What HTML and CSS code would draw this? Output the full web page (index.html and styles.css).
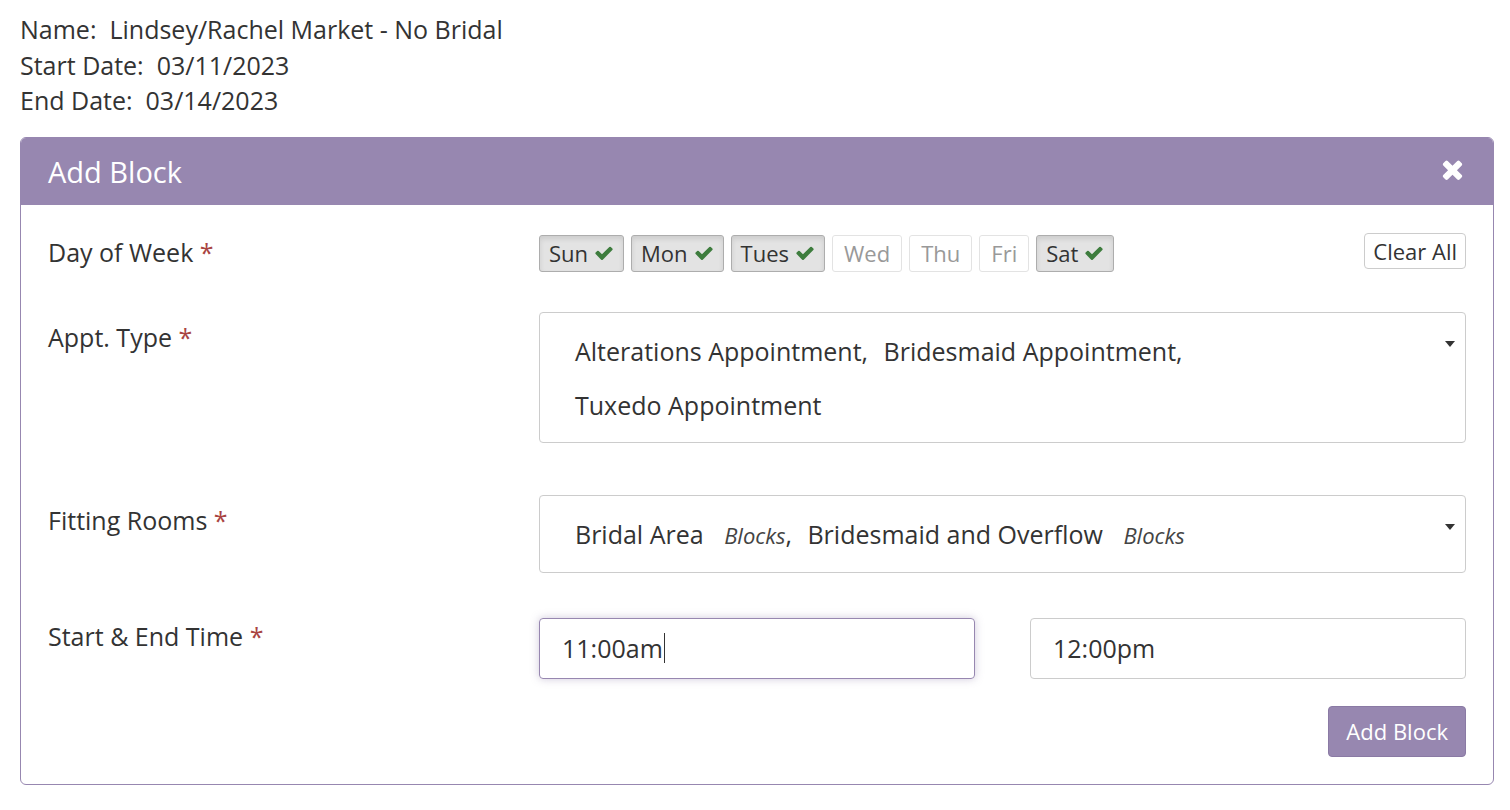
FILE: index.html
```html
<!DOCTYPE html>
<html>
    <head>
        <meta http-equiv="Content-Type" content="text/html; charset=UTF-8">
        <title>Add Block</title>
        <link rel="stylesheet" href="styles.css">
    </head>
    <body>
        <div class="event-info">
            <div>Name:&nbsp; Lindsey/Rachel Market - No Bridal</div>
            <div>Start Date:&nbsp; 03/11/2023</div>
            <div>End Date:&nbsp; 03/14/2023</div>
        </div>

        <div class="panel">
            <div class="panel-heading">
                <span>Add Block</span>
                <svg class="close-icon" viewBox="0 0 1408 1792" width="23" height="30">
                    <path fill="#fff" d="M1298 1214q0 40-28 68l-136 136q-28 28-68 28t-68-28l-294-294-294 294q-28 28-68 28t-68-28l-136-136q-28-28-28-68t28-68l294-294-294-294q-28-28-28-68t28-68l136-136q28-28 68-28t68 28l294 294 294-294q28-28 68-28t68 28l136 136q28 28 28 68t-28 68l-294 294 294 294q28 28 28 68z"/>
                </svg>
            </div>
            <div class="panel-body">
                <!-- day of week -->
                <div class="form-row row-days">
                    <label class="label-tight">Day of Week <span class="req">*</span></label>
                    <div class="days">
                        <div class="day-list">
                            <span class="day on">Sun <svg class="check" viewBox="0 0 1792 1792"><path d="M1671 566q0 40-28 68l-724 724-136 136q-28 28-68 28t-68-28l-136-136-362-362q-28-28-28-68t28-68l136-136q28-28 68-28t68 28l294 295 656-657q28-28 68-28t68 28l136 136q28 28 28 68z"/></svg></span>
                            <span class="day on">Mon <svg class="check" viewBox="0 0 1792 1792"><path d="M1671 566q0 40-28 68l-724 724-136 136q-28 28-68 28t-68-28l-136-136-362-362q-28-28-28-68t28-68l136-136q28-28 68-28t68 28l294 295 656-657q28-28 68-28t68 28l136 136q28 28 28 68z"/></svg></span>
                            <span class="day on">Tues <svg class="check" viewBox="0 0 1792 1792"><path d="M1671 566q0 40-28 68l-724 724-136 136q-28 28-68 28t-68-28l-136-136-362-362q-28-28-28-68t28-68l136-136q28-28 68-28t68 28l294 295 656-657q28-28 68-28t68 28l136 136q28 28 28 68z"/></svg></span>
                            <span class="day">Wed</span>
                            <span class="day">Thu</span>
                            <span class="day">Fri</span>
                            <span class="day on">Sat <svg class="check" viewBox="0 0 1792 1792"><path d="M1671 566q0 40-28 68l-724 724-136 136q-28 28-68 28t-68-28l-136-136-362-362q-28-28-28-68t28-68l136-136q28-28 68-28t68 28l294 295 656-657q28-28 68-28t68 28l136 136q28 28 28 68z"/></svg></span>
                        </div>
                        <button class="btn-clear">Clear All</button>
                    </div>
                </div>

                <!-- appointment type -->
                <div class="form-row row-appt">
                    <label>Appt. Type <span class="req">*</span></label>
                    <div class="multi-select">
                        <div class="choices">
                            <span class="choice">Alterations Appointment,</span>
                            <span class="choice">Bridesmaid Appointment,</span>
                            <span class="choice">Tuxedo Appointment</span>
                        </div>
                        <span class="caret"></span>
                    </div>
                </div>

                <!-- fitting rooms -->
                <div class="form-row row-rooms">
                    <label>Fitting Rooms <span class="req">*</span></label>
                    <div class="multi-select">
                        <div class="choices">
                            <span class="choice">Bridal Area <em>Blocks</em>,</span>
                            <span class="choice">Bridesmaid and Overflow <em>Blocks</em></span>
                        </div>
                        <span class="caret"></span>
                    </div>
                </div>

                <!-- times -->
                <div class="form-row row-times">
                    <label class="label-tight">Start &amp; End Time <span class="req">*</span></label>
                    <div class="times">
                        <div class="time-input focused">11:00am<span class="cursor"></span></div>
                        <div class="time-input">12:00pm</div>
                    </div>
                </div>

                <div class="actions">
                    <button class="btn-add">Add Block</button>
                </div>
            </div>
        </div>
    </body>
</html>
```

FILE: styles.css
```css
body {
    margin: 0;
    padding: 12px 16px 0 20px;
    font-family: "Open Sans", Arial, sans-serif;
    color: #333;
    background: #fff;
}
.event-info {
    font-size: 25px;
    line-height: 35.5px;
    margin-bottom: 18px;
}

/* Panel */
.panel {
    border: 1px solid #9787b0;
    border-radius: 6px;
    overflow: hidden;
}
.panel-heading {
    background-color: #9787b0;
    color: #fff;
    height: 67px;
    padding: 0 29px 0 27px;
    display: flex;
    align-items: center;
    justify-content: space-between;
    font-size: 29px;
}
.close-icon {
    display: block;
}
.panel-body {
    padding: 29px 27px 27px 27px;
}

.form-row {
    display: grid;
    grid-template-columns: 491px 1fr;
    align-items: start;
}
.form-row label {
    font-size: 25px;
    line-height: 30px;
    padding-top: 10px;
}
.form-row label.label-tight {
    padding-top: 3px;
}
.req {
    color: #a94442;
}
.row-days {
    margin-bottom: 40px;
}
.row-appt {
    margin-bottom: 52px;
}
.row-rooms {
    margin-bottom: 45px;
}
.row-times {
    margin-bottom: 27px;
}

/* Day of week toggles */
.days {
    display: flex;
    justify-content: space-between;
    align-items: flex-start;
}
.day-list {
    display: flex;
    gap: 7px;
    padding-top: 1px;
}
.day {
    display: flex;
    align-items: center;
    gap: 6px;
    height: 35px;
    padding: 0 11px;
    border: 1px solid #e3e3e3;
    border-radius: 3px;
    font-size: 22px;
    color: #999;
    background: #fff;
}
.day.on {
    padding: 0 9px;
    color: #333;
    background-color: #e3e3e3;
    border-color: #adadad;
    box-shadow: inset 0 3px 5px rgba(0, 0, 0, 0.1);
}
.check {
    width: 20px;
    height: 20px;
    fill: #3e7d3e;
}
.btn-clear {
    font-family: inherit;
    font-size: 22px;
    color: #333;
    background: #fff;
    border: 1px solid #ccc;
    border-radius: 4px;
    height: 36px;
    padding: 0 8px;
    margin-top: -1px;
}

/* Multi select boxes */
.multi-select {
    position: relative;
    border: 1px solid #ccc;
    border-radius: 4px;
    padding: 11px 60px 10px 35px;
}
.choices {
    font-size: 25px;
    line-height: 54px;
}
.choice {
    display: inline-block;
    margin-right: 9px;
}
.choice em {
    font-size: 22px;
    color: #444;
    margin-left: 14px;
}
.caret {
    position: absolute;
    right: 10px;
    top: 28px;
    width: 0;
    height: 0;
    border-left: 5px solid transparent;
    border-right: 5px solid transparent;
    border-top: 6px solid #333;
}

/* Time inputs */
.times {
    display: grid;
    grid-template-columns: 1fr 1fr;
    gap: 55px;
}
.time-input {
    height: 59px;
    border: 1px solid #ccc;
    border-radius: 4px;
    padding-left: 22px;
    display: flex;
    align-items: center;
    font-size: 25px;
    color: #333;
}
.time-input.focused {
    border-color: #9787b0;
    box-shadow: 0 0 8px rgba(151, 135, 176, 0.45);
}
.cursor {
    display: inline-block;
    width: 1px;
    height: 30px;
    background: #333;
    margin-left: 1px;
}

.actions {
    display: flex;
    justify-content: flex-end;
}
.btn-add {
    font-family: inherit;
    font-size: 22px;
    color: #fff;
    background-color: #9787b0;
    border: 1px solid #8a7aa4;
    border-radius: 4px;
    height: 51px;
    padding: 0 17px;
}
```
